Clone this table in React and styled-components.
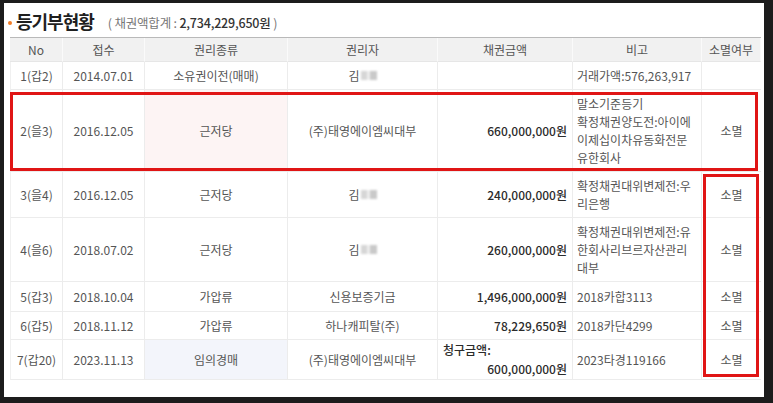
import React from 'react';
import styled, { createGlobalStyle } from 'styled-components';

const GlobalStyle = createGlobalStyle`
  html, body {
    margin: 0;
    padding: 0;
    background: #1c1c1c;
  }
  body {
    font-family: "Noto Sans CJK KR", "Noto Sans", sans-serif;
  }
`;

const COLS = [
  { key: 'no', label: 'No', align: 'center' },
  { key: 'date', label: '접수', align: 'center' },
  { key: 'kind', label: '권리종류', align: 'center' },
  { key: 'owner', label: '권리자', align: 'center' },
  { key: 'amount', label: '채권금액', align: 'right' },
  { key: 'note', label: '비고', align: 'left' },
  { key: 'gone', label: '소멸여부', align: 'center' },
];

const Masked = ({ gap }) => (
  <>
    김{gap ? ' ' : ''}
    <Blur />
  </>
);

const rows = [
  {
    no: '1(갑2)',
    date: '2014.07.01',
    kind: '소유권이전(매매)',
    owner: <Masked />,
    amount: '',
    note: ['거래가액:576,263,917'],
    gone: '',
  },
  {
    no: '2(을3)',
    date: '2016.12.05',
    kind: '근저당',
    kindBg: '#fdf4f4',
    owner: '(주)태영에이엠씨대부',
    amount: '660,000,000원',
    note: ['말소기준등기', '확정채권양도전:아이에', '이제십이차유동화전문', '유한회사'],
    gone: '소멸',
  },
  {
    no: '3(을4)',
    date: '2016.12.05',
    kind: '근저당',
    owner: <Masked gap />,
    amount: '240,000,000원',
    note: ['확정채권대위변제전:우', '리은행'],
    gone: '소멸',
  },
  {
    no: '4(을6)',
    date: '2018.07.02',
    kind: '근저당',
    owner: <Masked gap />,
    amount: '260,000,000원',
    note: ['확정채권대위변제전:유', '한회사리브르자산관리', '대부'],
    gone: '소멸',
  },
  {
    no: '5(갑3)',
    date: '2018.10.04',
    kind: '가압류',
    owner: '신용보증기금',
    amount: '1,496,000,000원',
    note: ['2018카합3113'],
    gone: '소멸',
  },
  {
    no: '6(갑5)',
    date: '2018.11.12',
    kind: '가압류',
    owner: '하나캐피탈(주)',
    amount: '78,229,650원',
    note: ['2018카단4299'],
    gone: '소멸',
  },
  {
    no: '7(갑20)',
    date: '2023.11.13',
    kind: '임의경매',
    kindBg: '#f3f5fb',
    owner: '(주)태영에이엠씨대부',
    amount: '600,000,000원',
    claim: true,
    note: ['2023타경119166'],
    gone: '소멸',
  },
];

// red annotation boxes drawn over the table
const marks = [
  { row: '3 / 4', col: '1 / -1', inset: '2px 3px 1px 0' },
  { row: '4 / 9', col: '7 / 8', inset: '2px 2px 3px 1px' },
];

const App = () => {
  return (
    <>
      <GlobalStyle />
      <Frame>
        <Panel>
          <TitleBar>
            <Bullet />
            <Heading>등기부현황</Heading>
            <Sum>
              ( 채권액합계 : <b>2,734,229,650원</b> )
            </Sum>
          </TitleBar>

          <Grid>
            {COLS.map((c, ci) => (
              <HeadCell key={c.key} $r={1} $c={ci + 1}>
                {c.label}
              </HeadCell>
            ))}

            {rows.map((row, ri) =>
              COLS.map((c, ci) => {
                const r = ri + 2;
                if (c.key === 'note') {
                  return (
                    <Cell key={c.key + ri} $r={r} $c={ci + 1} $align="left">
                      <Lines>
                        {row.note.map((l) => (
                          <span key={l}>{l}</span>
                        ))}
                      </Lines>
                    </Cell>
                  );
                }
                if (c.key === 'amount') {
                  return (
                    <Cell key={c.key + ri} $r={r} $c={ci + 1} $align="right">
                      {row.claim ? (
                        <Claim>
                          <Amount $side="left">청구금액:</Amount>
                          <Amount $side="right">{row.amount}</Amount>
                        </Claim>
                      ) : (
                        <Amount>{row.amount}</Amount>
                      )}
                    </Cell>
                  );
                }
                return (
                  <Cell
                    key={c.key + ri}
                    $r={r}
                    $c={ci + 1}
                    $align={c.align}
                    $bg={c.key === 'kind' ? row.kindBg : undefined}
                  >
                    {row[c.key]}
                  </Cell>
                );
              })
            )}

            {marks.map((m) => (
              <Mark key={m.row} $row={m.row} $col={m.col} $inset={m.inset} />
            ))}
          </Grid>
        </Panel>
      </Frame>
    </>
  );
};

export default App;

const Frame = styled.div`
  width: 773px;
  height: 403px;
  box-sizing: border-box;
  padding: 3px 9px 6px 4px;
`;

const Panel = styled.section`
  height: 100%;
  box-sizing: border-box;
  padding: 0 3px 0 6px;
  background: #fff;
`;

const TitleBar = styled.div`
  display: flex;
  align-items: center;
  height: 34px;
  padding-top: 2px;
  box-sizing: border-box;
`;

const Bullet = styled.span`
  width: 4px;
  height: 4px;
  margin: 3px 4px 0 -2px;
  border-radius: 50%;
  background: #f27d26;
`;

const Heading = styled.h2`
  margin: 0;
  font-size: 18px;
  font-weight: 700;
  letter-spacing: -1px;
  color: #1f1f1f;
`;

const Sum = styled.span`
  margin: 3px 0 0 14px;
  font-size: 12.5px;
  color: #777;
  letter-spacing: -0.2px;
  b {
    font-weight: 500;
    color: #333;
  }
`;

const Grid = styled.div`
  display: grid;
  grid-template-columns: 53px 82px 143px 150px 135px 129px 59px;
  grid-template-rows: 24px 28px 82px 46px 64px 30px 28px 40px;
  border-top: 1px solid #b9b9b9;
  font-size: 12px;
  line-height: 18px;
  color: #555;
`;

const justify = { left: 'flex-start', center: 'center', right: 'flex-end' };

const HeadCell = styled.div`
  grid-row: ${(p) => p.$r};
  grid-column: ${(p) => p.$c};
  display: flex;
  align-items: center;
  justify-content: center;
  background: #f1f1f1;
  border-right: 1px solid #fafafa;
  border-bottom: 1px solid #e6e6e6;
  color: #555;
`;

const Cell = styled.div`
  grid-row: ${(p) => p.$r};
  grid-column: ${(p) => p.$c};
  display: flex;
  align-items: center;
  justify-content: ${(p) => justify[p.$align]};
  padding: 0 5px 0 ${(p) => (p.$align === 'left' ? 4 : 5)}px;
  background: ${(p) => p.$bg || '#fff'};
  border-right: 1px solid #ececec;
  border-bottom: 1px solid #ececec;
  border-left: ${(p) => (p.$c === 1 ? '1px solid #f0f0f0' : 'none')};
  white-space: nowrap;
  &:nth-child(7n) {
    border-right: none;
  }
`;

const Lines = styled.div`
  display: flex;
  flex-direction: column;
  color: #555;
`;

const Claim = styled.div`
  display: flex;
  flex-direction: column;
  width: 100%;
  margin-top: -2px;
  line-height: 19px;
`;

const Amount = styled.span`
  align-self: ${(p) =>
    p.$side === 'left' ? 'flex-start' : p.$side === 'right' ? 'flex-end' : 'auto'};
  font-weight: 500;
  color: #2b2b2b;
`;

const Blur = styled.span`
  display: inline-block;
  width: 16px;
  height: 9px;
  margin-left: 1px;
  vertical-align: -1px;
  background: linear-gradient(90deg, #d6d6d6 0 35%, #eee 35% 55%, #c9c9c9 55% 100%);
  filter: blur(1.2px);
`;

const Mark = styled.div`
  grid-row: ${(p) => p.$row};
  grid-column: ${(p) => p.$col};
  margin: ${(p) => p.$inset};
  border: 3px solid #e01515;
  pointer-events: none;
`;
